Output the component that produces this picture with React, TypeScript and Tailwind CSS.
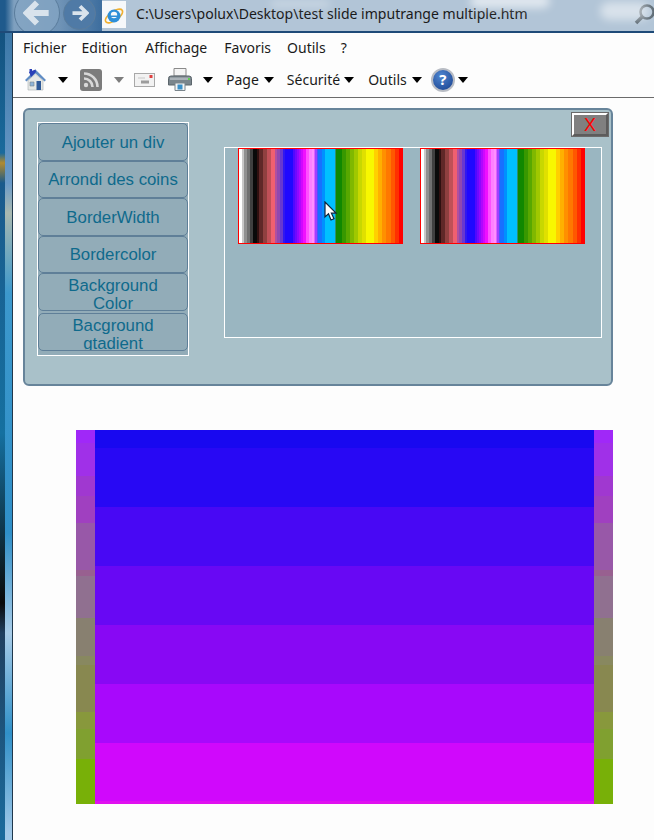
import React from "react";

const sans = "font-['Noto_Sans','Open_Sans',sans-serif]";

// colour stripes of the range slider, [colour, px]
const stripes: [string, number][] = [
  ["#ffffff", 3], ["#c8c8c8", 2], ["#909090", 3], ["#707070", 3], ["#404040", 3], ["#0a0a0a", 4],
  ["#301010", 2], ["#602828", 4], ["#904040", 4], ["#c05058", 4], ["#f06070", 4], ["#b050a0", 2],
  ["#9048b0", 3], ["#6838d0", 3], ["#3018f0", 2], ["#2008ff", 8], ["#5008ff", 2], ["#7008ff", 2],
  ["#9008ff", 2], ["#b008ff", 2], ["#d008ff", 2], ["#f010ff", 3], ["#ff50ff", 3], ["#ff80ff", 3],
  ["#ff90ff", 2], ["#e060ff", 1], ["#a040ff", 2], ["#5050ff", 1], ["#1870ff", 4], ["#0090ff", 3],
  ["#00c0ff", 10], ["#309070", 1], ["#108800", 6], ["#389800", 4],
  ["#58a800", 4], ["#80b800", 4], ["#a0c800", 4], ["#c8d800", 4], ["#e0e000", 4], ["#f8f800", 8],
  ["#ffd000", 4], ["#ffb000", 4], ["#ff9000", 4], ["#ff7800", 5], ["#ff5800", 4], ["#ff3000", 4],
  ["#ff0000", 5],
];

const centerBands = [
  "h-[18px] bg-[#1808f0]", "h-[59px] bg-[#2808f4]", "h-[59px] bg-[#4808f4]", "h-[59px] bg-[#6808f4]",
  "h-[59px] bg-[#8808f4]", "h-[59px] bg-[#a808fc]", "h-[58px] bg-[#d008fc]", "h-[3px] bg-[#e010f0]",
];

const sideBands = [
  "h-[13px] bg-[#a028f8]", "h-[33px] bg-[#a030e8]", "h-[20px] bg-[#a038d0]", "h-[27px] bg-[#a040c0]",
  "h-[47px] bg-[#9858a8]", "h-[6px] bg-[#986090]", "h-[42px] bg-[#907090]", "h-[38px] bg-[#888070]",
  "h-[9px] bg-[#888860]", "h-[47px] bg-[#888850]", "h-[17px] bg-[#88983c]", "h-[30px] bg-[#80a030]",
  "h-[45px] bg-[#78b008]",
];

const buttons = [
  { label: "Ajouter un div", cls: "h-[38px] pt-[2px]" },
  { label: "Arrondi des coins", cls: "h-[37px]" },
  { label: "BorderWidth", cls: "h-[38px] pt-[1px]" },
  { label: "Bordercolor", cls: "h-[37px]" },
  { label: "Background Color", cls: "h-[38px] pt-[6px]" },
  { label: "Bacground gtadient", cls: "h-[38px] mt-[2px] pt-[6px]" },
];

function Caret({ grey }: { grey?: boolean }) {
  return (
    <svg width="10" height="6" viewBox="0 0 10 6" className="shrink-0">
      <path d="M0 0h10L5 6z" fill={grey ? "#7d7d7d" : "#000"} />
    </svg>
  );
}

function HomeIcon() {
  return (
    <svg width="21" height="23" viewBox="0 0 21 23" className="shrink-0">
      <path d="M4.500 1h2.500v4H4.500z" fill="#2a40b8" />
      <path d="M10.500 1.500 21 12 19.500 13.500 10.500 5.500 1.500 13.500 0 12z" fill="#5f8cc4" />
      <path d="M4 4 10.500 1.500 11 4 6 9z" fill="#2a40b8" />
      <path d="M3 12.500 10.500 6 18 12.500V22H3z" fill="#e6e8e6" stroke="#a8b0b4" strokeWidth=".6" />
      <path d="M11.500 13H16v9h-4.500z" fill="#2f5a98" />
      <path d="M5 14h4v4H5z" fill="#8fb4d8" stroke="#76848f" strokeWidth=".6" />
    </svg>
  );
}

function RssIcon() {
  return (
    <svg width="22" height="22" viewBox="0 0 22 22" className="shrink-0">
      <rect width="22" height="22" rx="3" fill="#7c7c7c" />
      <circle cx="6" cy="16" r="2.200" fill="#d8d8d8" />
      <path d="M4 9.500a8.500 8.500 0 0 1 8.500 8.500M4 4.500A13.500 13.500 0 0 1 17.500 18" fill="none" stroke="#d8d8d8" strokeWidth="2.600" />
    </svg>
  );
}

function MailIcon() {
  return (
    <svg width="21" height="14" viewBox="0 0 21 14" className="shrink-0">
      <rect x=".5" y=".5" width="20" height="13" fill="#f2f2f2" stroke="#a8a8a8" />
      <path d="M7 7.500h8v3H7z" fill="#9c9c9c" />
      <path d="M4 5h7" stroke="#c8c8c8" />
      <rect x="15.500" y="2" width="3" height="3" fill="#e04040" />
    </svg>
  );
}

function PrinterIcon() {
  return (
    <svg width="24" height="23" viewBox="0 0 24 23" className="shrink-0">
      <path d="M6 .5h12V8H6z" fill="#f4f4f4" stroke="#8a8a8a" />
      <path d="M3 8h18a2.500 2.500 0 0 1 2.500 2.500V17H.5v-6.500A2.500 2.500 0 0 1 3 8z" fill="#7a858c" stroke="#5c666c" />
      <path d="M2 9.500h20V12H2z" fill="#aab2b8" />
      <rect x="20" y="10" width="2" height="2" fill="#60d050" />
      <path d="M7 15h10v7.500H7z" fill="#f4f4f4" stroke="#7a858c" />
      <path d="M9.500 16.500h5v5h-5z" fill="#3a90c8" />
    </svg>
  );
}

function NavButton({ size, cls, arrow, d }: { size: string; cls: string; arrow: number; d: string }) {
  return (
    <div className={`${size} ${cls} rounded-full border border-[#5a7c9c] flex items-center justify-center shrink-0`}>
      <svg width={arrow} height={arrow} viewBox="0 0 24 24" fill="none" stroke="#d9e3ec" strokeWidth="5">
        <path d={d} />
      </svg>
    </div>
  );
}

function RangeBar() {
  return (
    <div className="border border-[#ff0000] w-[165px] h-[96px] shrink-0">
      <svg width="163" height="94" viewBox="0 0 163 94" className="block">
        {stripes.map(([color, w], i) => {
          const x = stripes.slice(0, i).reduce((sum, s) => sum + s[1], 0);
          return <rect key={i} x={x} y="0" width={w} height="94" fill={color} />;
        })}
      </svg>
    </div>
  );
}

function Bands({ items, width }: { items: string[]; width: string }) {
  return (
    <div className={`${width} flex flex-col shrink-0`}>
      {items.map((c, i) => (
        <div key={i} className={c} />
      ))}
    </div>
  );
}

export default function App() {
  return (
    <div className="w-[654px] h-[840px] overflow-hidden flex flex-col bg-[#fdfdfd]">
      {/* Barre d'adresse */}
      <div className="relative h-[33px] shrink-0 overflow-hidden bg-[linear-gradient(90deg,#1f5a8c_0px,#1f5a8c_5px,#7fa0bf_14px,#6f93b6_60px,#3f6f9f_100px,#3f6f9f_102px,#b2c5d7_102px,#b2c5d7_654px)] border-b-2 border-[#1e4a78]">
        <div className="absolute left-[470px] -top-[6px] w-[80px] h-[14px] rounded-full bg-white/60 blur-[4px]" />
        <div className="absolute left-[270px] top-[0px] w-[60px] h-[8px] rounded-full bg-white/30 blur-[4px]" />
        <div className="absolute left-[600px] top-[2px] w-[50px] h-[18px] rounded-full bg-white/50 blur-[4px]" />
        <div className="flex items-center h-full">
          <NavButton size="w-[46px] h-[46px]" cls="ml-[14px] -mt-[6px] bg-[#86a6c4]/70" arrow={28} d="M22 12H4M12 3l-9 9 9 9" />
          <NavButton size="w-[33px] h-[33px]" cls="ml-[3px] -mt-[5px] bg-[#4f7aa6]" arrow={18} d="M2 12h18M12 3l9 9-9 9" />
          <div className="ml-[6px] w-[24px] h-[27px] bg-[#f6f8fa] flex items-center justify-center shrink-0 -mt-[2px]">
            <svg width="22" height="22" viewBox="0 0 22 22">
              <ellipse cx="11" cy="12" rx="10" ry="4.500" fill="none" stroke="#f0b030" strokeWidth="1.600" transform="rotate(-35 11 12)" />
              <circle cx="11" cy="12" r="6.500" fill="#2d8fd8" />
              <circle cx="11" cy="11" r="3.200" fill="#f6f8fa" />
              <path d="M7 11.500h8v1.400H7zM12 14l4 0-2 3-3 0z" fill="#2d8fd8" />
            </svg>
          </div>
          <span className={`${sans} ml-[10px] text-[14.050px] text-[#1a1a1a] whitespace-nowrap -mt-[3px]`}>
            C:\Users\polux\Desktop\test slide imputrange multiple.htm
          </span>
          <svg width="20" height="26" viewBox="0 0 20 26" className="ml-auto -mt-[2px] shrink-0" fill="none" stroke="#56646f" strokeWidth="2.500">
            <circle cx="13" cy="10" r="6.500" />
            <path d="M8 15l-6 6" strokeWidth="3.500" />
          </svg>
        </div>
      </div>

      <div className="flex flex-1 min-h-0">
        {/* Bord de la fenêtre */}
        <div className="w-[13px] shrink-0 flex border-r border-[#20384c]">
          <div className="w-[5px] bg-[linear-gradient(180deg,#14527f,#1a6a9c_120px,#b08a30_130px,#1a5a8c_150px,#1570a0_400px,#0a0a0a_570px,#204060_600px,#1a6a9c_800px)]" />
          <div className="w-[7px] bg-[linear-gradient(180deg,#3c78a8,#6a9ac8_150px,#a8b8b0_180px,#3c98cc_260px,#2f8fc8_500px,#a8cce8_600px,#3090c8_700px,#a0c8e8_800px)]" />
        </div>

        <div className="flex-1 min-w-0 flex flex-col">
          {/* Menu */}
          <div className={`${sans} flex items-center h-[29px] pl-[10px] text-[14px] text-[#1a1a1a] shrink-0`}>
            <span>Fichier</span>
            <span className="ml-[15px]">Edition</span>
            <span className="ml-[18px]">Affichage</span>
            <span className="ml-[17px]">Favoris</span>
            <span className="ml-[16px]">Outils</span>
            <span className="ml-[15px]">?</span>
          </div>

          {/* Barre d'outils */}
          <div className={`${sans} flex items-center h-[36px] pl-[12px] text-[14px] text-[#1a1a1a] border-b border-[#6b6b6b] shrink-0`}>
            <HomeIcon />
            <div className="ml-[12px]"><Caret /></div>
            <div className="ml-[12px]"><RssIcon /></div>
            <div className="ml-[12px]"><Caret grey /></div>
            <div className="ml-[10px]"><MailIcon /></div>
            <div className="ml-[13px]"><PrinterIcon /></div>
            <div className="ml-[11px]"><Caret /></div>
            <span className="ml-[13px]">Page</span>
            <div className="ml-[5px]"><Caret /></div>
            <span className="ml-[13px]">Sécurité</span>
            <div className="ml-[4px]"><Caret /></div>
            <span className="ml-[14px]">Outils</span>
            <div className="ml-[5px]"><Caret /></div>
            <div className="ml-[9px] w-[24px] h-[24px] rounded-full bg-[radial-gradient(circle_at_40%_30%,#4f86d0,#173f8c)] border-2 border-[#b8bcc4] flex items-center justify-center shrink-0">
              <span className="text-white text-[15px] font-bold leading-none">?</span>
            </div>
            <div className="ml-[3px]"><Caret /></div>
          </div>

          {/* Panneau */}
          <div className="relative ml-[10px] mt-[10px] w-[590px] h-[278px] shrink-0 flex bg-[#a9c1c9] border-2 border-[#67849a] rounded-[6px] pl-[12px] pt-[12px]">
            <div className="w-[152px] h-[234px] shrink-0 border border-white flex flex-col bg-[#92acb8]">
              {buttons.map((b) => (
                <div
                  key={b.label}
                  className={`${b.cls} shrink-0 overflow-hidden bg-[#92acb8] border border-[#5f7f98] rounded-[5px] px-[12px] flex items-center justify-center text-center font-['Liberation_Sans',sans-serif] text-[16.800px] leading-[18px] text-[#0f6a8c] whitespace-pre-line`}
                >
                  {b.label === "Arrondi des coins" ? <span className="-mx-[10px]">{b.label}</span> : b.label}
                </div>
              ))}
            </div>

            <div className="ml-[35px] mt-[25px] w-[378px] h-[191px] shrink-0 border border-white bg-[#9ab6c1] flex items-start gap-[17px] pl-[13px]">
              <RangeBar />
              <RangeBar />
            </div>

            <div className="absolute right-[3px] top-[3px] w-[36px] h-[23px] bg-[#808080] border-2 border-t-white border-l-white border-r-[#5c5c5c] border-b-[#5c5c5c] outline outline-1 outline-[#6a6a6a] flex items-center justify-center font-['Liberation_Sans',sans-serif] text-[18px] leading-none text-[#ff0000]">
              X
            </div>

            <svg width="13" height="21" viewBox="0 0 13 21" className="absolute left-[299px] top-[91px]">
              <path d="M1 1v15l3.500-3.200L7 19l3-1.300-2.600-5.500H12z" fill="#fff" stroke="#10243c" strokeWidth="1.200" />
            </svg>
          </div>

          {/* Bloc résultat */}
          <div className="ml-[63px] mt-[44px] flex shrink-0">
            <Bands items={sideBands} width="w-[19px]" />
            <Bands items={centerBands} width="w-[499px]" />
            <Bands items={sideBands} width="w-[19px]" />
          </div>
        </div>
      </div>
    </div>
  );
}
